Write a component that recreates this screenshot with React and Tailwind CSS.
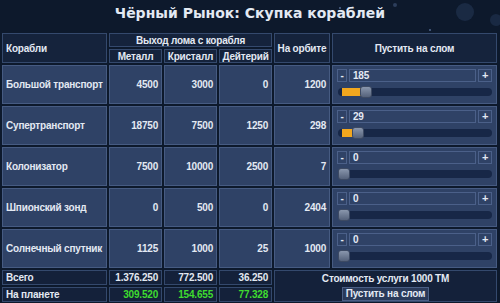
import React from 'react';

const ships = [
    { name: 'Большой транспорт', metal: '4500', crystal: '3000', deut: '0', orbit: 1200, value: 185 },
    { name: 'Супертранспорт', metal: '18750', crystal: '7500', deut: '1250', orbit: 298, value: 29 },
    { name: 'Колонизатор', metal: '7500', crystal: '10000', deut: '2500', orbit: 7, value: 0 },
    { name: 'Шпионский зонд', metal: '0', crystal: '500', deut: '0', orbit: 2404, value: 0 },
    { name: 'Солнечный спутник', metal: '1125', crystal: '1000', deut: '25', orbit: 1000, value: 0 },
];

const head = 'bg-[#15233c] border border-[#34496d] flex items-center whitespace-nowrap';
const cell = 'bg-[#2f4266] border border-[#465b82] flex items-center whitespace-nowrap';
const foot = 'bg-[#14213a] border border-[#34496d] flex items-center whitespace-nowrap';

function Slider({ value, max }) {
    const frac = max ? value / max : 0;
    const left = Math.round(frac * 142);
    return (
        <div className="flex flex-col w-full h-full px-[4px] pt-[3px]">
            <div className="flex gap-[2px] h-[13px]">
                <div className="w-[10px] border border-[#4b6089] text-[10px] leading-[11px] text-center">-</div>
                <div className="flex-1 border border-[#4b6089] text-[10px] leading-[11px] pl-[3px]">{value}</div>
                <div className="w-[14px] border border-[#4b6089] text-[11px] leading-[11px] text-center">+</div>
            </div>
            <div className="relative mt-[6px] ml-[1px] w-[154px] h-[8px] rounded-full bg-[#172747]">
                {value > 0 && (
                    <div className="absolute left-[4px] top-0 h-[8px] bg-[#f2a71e]" style={{ width: left + 2 }} />
                )}
                <div
                    className="absolute top-[-2px] w-[12px] h-[12px] rounded-[3px] bg-gradient-to-b from-[#8a97ad] to-[#55627b] border border-[#3d4a63]"
                    style={{ left }}
                />
            </div>
        </div>
    );
}

export default function App() {
    return (
        <div
            className="relative w-[500px] h-[303px] overflow-hidden bg-[#0d192c] text-[#e3e9f3]"
            style={{ fontFamily: '"Liberation Sans", Arial, sans-serif' }}
        >
            <svg className="absolute right-0 top-0" width="180" height="60">
                <circle cx="145" cy="12" r="9" fill="#233553" opacity="0.6" />
                <circle cx="176" cy="20" r="6" fill="#26395a" opacity="0.5" />
                <circle cx="75" cy="5" r="2" fill="#2c3e5c" />
                <circle cx="110" cy="30" r="1" fill="#51678c" />
                <circle cx="20" cy="8" r="1" fill="#51678c" />
            </svg>
            <div
                className="relative text-center font-bold text-[14px] leading-[20px] pt-[3px] h-[33px]"
                style={{ fontFamily: '"DejaVu Sans", Verdana, sans-serif' }}
            >
                Чёрный Рынок: Скупка кораблей
            </div>
            <div className="relative grid grid-cols-[105px_53px_53px_53px_56px_165px] grid-rows-[14px_14px_39px_39px_39px_39px_39px_15px_15px] gap-[2px] px-[2px] text-[10px] font-bold tracking-[-0.2px]">
                <div className={`${head} row-span-2 pl-[3px]`}>Корабли</div>
                <div className={`${head} col-span-3 justify-center`}>Выход лома с корабля</div>
                <div className={`${head} row-span-2 justify-center`}>На орбите</div>
                <div className={`${head} row-span-2 justify-center`}>Пустить на слом</div>
                <div className={`${head} justify-center`}>Металл</div>
                <div className={`${head} justify-center`}>Кристалл</div>
                <div className={`${head} justify-center`}>Дейтерий</div>

                {ships.map((s) => (
                    <React.Fragment key={s.name}>
                        <div className={`${cell} pl-[3px]`}>{s.name}</div>
                        <div className={`${cell} justify-end pr-[3px]`}>{s.metal}</div>
                        <div className={`${cell} justify-end pr-[3px]`}>{s.crystal}</div>
                        <div className={`${cell} justify-end pr-[3px]`}>{s.deut}</div>
                        <div className={`${cell} justify-end pr-[3px]`}>{s.orbit}</div>
                        <div className={`${cell} items-start`}>
                            <Slider value={s.value} max={s.orbit} />
                        </div>
                    </React.Fragment>
                ))}

                <div className={`${foot} pl-[3px]`}>Всего</div>
                <div className={`${foot} justify-end pr-[3px]`}>1.376.250</div>
                <div className={`${foot} justify-end pr-[3px]`}>772.500</div>
                <div className={`${foot} justify-end pr-[3px]`}>36.250</div>
                <div className={`${foot} row-span-2 col-span-2 flex-col justify-center gap-[1px]`}>
                    <div>Стоимость услуги 1000 ТМ</div>
                    <button className="bg-[#2a3a5a] border border-[#4a5f86] px-[3px] h-[14px] leading-[12px] font-bold text-[10px]">
                        Пустить на слом
                    </button>
                </div>
                <div className={`${foot} pl-[3px]`}>На планете</div>
                <div className={`${foot} justify-end pr-[3px] text-[#3fdc2f]`}>309.520</div>
                <div className={`${foot} justify-end pr-[3px] text-[#3fdc2f]`}>154.655</div>
                <div className={`${foot} justify-end pr-[3px] text-[#3fdc2f]`}>77.328</div>
            </div>
        </div>
    );
}
